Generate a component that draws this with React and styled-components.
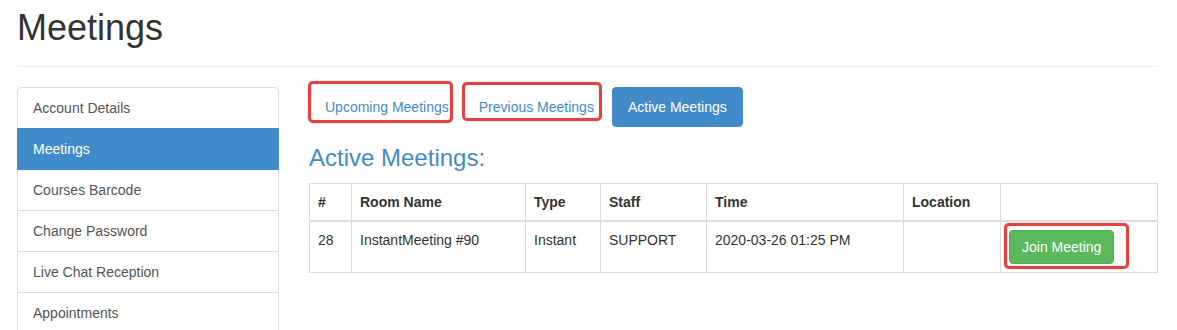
import React from 'react';
import styled, { createGlobalStyle } from 'styled-components';

const GlobalStyle = createGlobalStyle`
  body {
    margin: 0;
    background: #fff;
    font-family: "Liberation Sans", Arial, sans-serif;
    font-size: 14px;
    line-height: 20px;
    color: #333;
  }
`;

const Page = styled.div`
  width: 1140px;
  margin-left: 17px;
`;

const PageHeader = styled.h1`
  margin: 8px 0 20px;
  padding-bottom: 18px;
  border-bottom: 1px solid #eee;
  font-size: 36px;
  font-weight: 400;
  line-height: 1.1;
  color: #333;
`;

const Layout = styled.div`
  display: flex;
  align-items: flex-start;
  gap: 30px;
`;

const SideNav = styled.nav`
  width: 262px;
  flex-shrink: 0;
  display: flex;
  flex-direction: column;
`;

const NavItem = styled.a`
  display: block;
  padding: 10px 15px;
  border: 1px solid ${(p) => (p.$active ? '#428bca' : '#ddd')};
  margin-bottom: -1px;
  background: ${(p) => (p.$active ? '#428bca' : '#fff')};
  color: ${(p) => (p.$active ? '#fff' : '#555')};
  text-decoration: none;
  position: relative;
  z-index: ${(p) => (p.$active ? 2 : 1)};

  &:first-child {
    border-radius: 4px 4px 0 0;
  }
`;

const Main = styled.main`
  flex: 1;
  min-width: 0;
`;

const TabBar = styled.div`
  display: flex;
  align-items: center;
`;

// red annotation frame drawn over a control
const Highlight = styled.span`
  position: relative;
  display: inline-block;

  &::after {
    content: '';
    position: absolute;
    top: ${(p) => p.$t}px;
    right: ${(p) => p.$r}px;
    bottom: ${(p) => p.$b}px;
    left: ${(p) => p.$l}px;
    border: 3px solid #e8403e;
    border-radius: 5px;
    box-shadow: 0 0 1px rgba(0, 0, 0, 0.45), inset 0 0 1px rgba(0, 0, 0, 0.3);
    pointer-events: none;
  }
`;

const TabButton = styled.button`
  font-family: inherit;
  font-size: 14px;
  line-height: 18px;
  padding: ${(p) => (p.$active ? '10px 15px' : '10px 13px 10px 15px')};
  border: 1px solid ${(p) => (p.$active ? '#428bca' : 'transparent')};
  border-radius: 4px;
  background: ${(p) => (p.$active ? '#428bca' : 'transparent')};
  color: ${(p) => (p.$active ? '#fff' : '#428bca')};
  margin-left: ${(p) => (p.$active ? '4px' : '0')};
  cursor: pointer;
`;

const SectionTitle = styled.h3`
  margin: 18px 0 12px;
  font-size: 24px;
  font-weight: 400;
  line-height: 1.1;
  color: #428bca;
`;

const Table = styled.table`
  width: 848px;
  border-collapse: collapse;
  table-layout: fixed;
  border: 1px solid #ddd;
`;

const Th = styled.th`
  padding: 8px;
  text-align: left;
  font-weight: 700;
  line-height: 20px;
  border: 1px solid #ddd;
  border-bottom: 2px solid #ddd;
  vertical-align: bottom;
`;

const Td = styled.td`
  padding: 8px;
  line-height: 20px;
  border: 1px solid #ddd;
  vertical-align: top;
`;

const JoinButton = styled.button`
  font-family: inherit;
  font-size: 14px;
  line-height: 20px;
  padding: 6px 12px;
  border: 1px solid #4cae4c;
  border-radius: 4px;
  background: #5cb85c;
  color: #fff;
  cursor: pointer;
`;

const menu = [
  'Account Details',
  'Meetings',
  'Courses Barcode',
  'Change Password',
  'Live Chat Reception',
  'Appointments',
];

const columns = [
  { label: '#', width: 42 },
  { label: 'Room Name', width: 174 },
  { label: 'Type', width: 75 },
  { label: 'Staff', width: 106 },
  { label: 'Time', width: 197 },
  { label: 'Location', width: 97 },
  { label: '', width: 157 },
];

const meetings = [
  { id: 28, room: 'InstantMeeting #90', type: 'Instant', staff: 'SUPPORT', time: '2020-03-26 01:25 PM', location: '' },
];

const App = () => {
  return (
    <>
      <GlobalStyle />
      <Page>
        <PageHeader>Meetings</PageHeader>
        <Layout>
          <SideNav>
            {menu.map((item) => (
              <NavItem key={item} $active={item === 'Meetings'}>
                {item}
              </NavItem>
            ))}
          </SideNav>
          <Main>
            <TabBar>
              <Highlight $t={-6} $r={10} $b={4} $l={-1}>
                <TabButton>Upcoming Meetings</TabButton>
              </Highlight>
              <Highlight $t={-5} $r={6} $b={6} $l={-1}>
                <TabButton>Previous Meetings</TabButton>
              </Highlight>
              <TabButton $active>Active Meetings</TabButton>
            </TabBar>
            <SectionTitle>Active Meetings:</SectionTitle>
            <Table>
              <colgroup>
                {columns.map((c, i) => (
                  <col key={i} style={{ width: c.width }} />
                ))}
              </colgroup>
              <thead>
                <tr>
                  {columns.map((c, i) => (
                    <Th key={i}>{c.label}</Th>
                  ))}
                </tr>
              </thead>
              <tbody>
                {meetings.map((m) => (
                  <tr key={m.id}>
                    <Td>{m.id}</Td>
                    <Td>{m.room}</Td>
                    <Td>{m.type}</Td>
                    <Td>{m.staff}</Td>
                    <Td>{m.time}</Td>
                    <Td>{m.location}</Td>
                    <Td>
                      <Highlight $t={-7} $r={-15} $b={-5} $l={-5}>
                        <JoinButton>Join Meeting</JoinButton>
                      </Highlight>
                    </Td>
                  </tr>
                ))}
              </tbody>
            </Table>
          </Main>
        </Layout>
      </Page>
    </>
  );
};

export default App;
